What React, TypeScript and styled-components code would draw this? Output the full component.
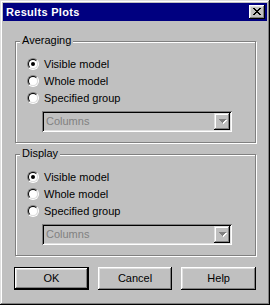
import React from 'react'
import styled, { createGlobalStyle } from 'styled-components'

const GlobalStyle = createGlobalStyle`
  html, body {
    margin: 0;
    padding: 0;
    background: #c0c0c0;
  }
  body {
    font-family: "Liberation Sans", Arial, sans-serif;
    font-size: 11px;
    color: #000;
  }
`

const Window = styled.div`
  width: 270px;
  height: 305px;
  box-sizing: border-box;
  padding: 3px;
  background: #c0c0c0;
  box-shadow: inset -1px -1px #000, inset 1px 1px #dfdfdf,
    inset -2px -2px #808080, inset 2px 2px #fff;
  display: flex;
  flex-direction: column;
`

const TitleBar = styled.div`
  height: 18px;
  background: #000080;
  color: #fff;
  display: flex;
  align-items: center;
  justify-content: space-between;
  padding: 0 2px 0 3px;
  font-weight: bold;
  font-size: 11px;
  line-height: 18px;
  letter-spacing: 0.3px;
`

const CloseButton = styled.div`
  width: 16px;
  height: 14px;
  box-sizing: border-box;
  padding: 3px 0 0 4px;
  background: #c0c0c0;
  box-shadow: inset -1px -1px #000, inset 1px 1px #fff,
    inset -2px -2px #808080, inset 2px 2px #dfdfdf;
  svg { display: block; }
`

const Body = styled.div`
  padding: 20px 11px 0 11px;
  display: flex;
  flex-direction: column;
`

const Group = styled.div<{ $gap?: number }>`
  position: relative;
  width: 241px;
  height: 102px;
  box-sizing: border-box;
  margin: ${p => p.$gap ?? 0}px 0 0 1px;
  border: 1px solid #808080;
  box-shadow: inset 1px 1px #fff, 1px 1px #fff;
  padding: 14px 0 0 11px;
`

const Legend = styled.span`
  position: absolute;
  top: -8px;
  left: 4px;
  padding: 0 2px;
  background: #c0c0c0;
  line-height: 13px;
`

const Options = styled.div`
  display: flex;
  flex-direction: column;
  gap: 1px;
`

const Option = styled.label`
  display: flex;
  align-items: center;
  height: 16px;
  line-height: 16px;
`

const RadioOuter = styled.span`
  flex: none;
  width: 12px;
  height: 12px;
  box-sizing: border-box;
  border-radius: 50%;
  border: 1px solid;
  border-color: #808080 #fff #fff #808080;
  margin-right: 5px;
`

const RadioInner = styled.span<{ $checked: boolean }>`
  display: flex;
  align-items: center;
  justify-content: center;
  width: 10px;
  height: 10px;
  box-sizing: border-box;
  border-radius: 50%;
  border: 1px solid;
  border-color: #000 #dfdfdf #dfdfdf #000;
  background: #fff;
  &::after {
    content: '';
    display: ${p => (p.$checked ? 'block' : 'none')};
    width: 4px;
    height: 4px;
    border-radius: 50%;
    background: #000;
  }
`

const Select = styled.div`
  margin: 5px 0 0 15px;
  width: 190px;
  height: 21px;
  box-sizing: border-box;
  padding: 2px;
  display: flex;
  box-shadow: inset 1px 1px #808080, inset -1px -1px #fff,
    inset 2px 2px #000, inset -2px -2px #dfdfdf;
`

const SelectText = styled.span`
  flex: 1;
  padding-left: 2px;
  line-height: 17px;
  color: #808080;
`

const SelectButton = styled.div`
  width: 16px;
  height: 17px;
  box-sizing: border-box;
  display: flex;
  align-items: center;
  justify-content: center;
  padding-left: 1px;
  box-shadow: inset -1px -1px #000, inset 1px 1px #dfdfdf,
    inset -2px -2px #808080, inset 2px 2px #fff;
  svg { display: block; }
`

const Buttons = styled.div`
  display: flex;
  gap: 9px;
  margin-top: 11px;
`

const Button = styled.button<{ $default?: boolean }>`
  width: 75px;
  height: 23px;
  box-sizing: border-box;
  padding: 0 0 2px;
  font-family: inherit;
  font-size: 11px;
  color: #000;
  background: #c0c0c0;
  border: ${p => (p.$default ? '1px solid #000' : 'none')};
  box-shadow: inset -1px -1px #000, inset 1px 1px #fff,
    inset -2px -2px #808080, inset 2px 2px #dfdfdf;
`

const CloseGlyph = () => (
  <svg width="8" height="7" viewBox="0 0 8 7" shapeRendering="crispEdges">
    <path fill="#000" d="M0 0h2v1H0zM6 0h2v1H6zM1 1h2v1H1zM5 1h2v1H5zM2 2h4v1H2zM3 3h2v1H3zM2 4h4v1H2zM1 5h2v1H1zM5 5h2v1H5zM0 6h2v1H0zM6 6h2v1H6z" />
  </svg>
)

const DisabledArrow = () => (
  <svg width="8" height="5" viewBox="0 0 8 5" shapeRendering="crispEdges">
    <path fill="#fff" d="M1 1h7v1H1zM2 2h5v1H2zM3 3h3v1H3zM4 4h1v1H4z" />
    <path fill="#808080" d="M0 0h7v1H0zM1 1h5v1H1zM2 2h3v1H2zM3 3h1v1H3z" />
  </svg>
)

const choices = ['Visible model', 'Whole model', 'Specified group']

const ScopeGroup: React.FC<{ title: string; gap?: number }> = ({ title, gap }) => (
  <Group $gap={gap}>
    <Legend>{title}</Legend>
    <Options>
      {choices.map((c, i) => (
        <Option key={c}>
          <RadioOuter>
            <RadioInner $checked={i === 0} />
          </RadioOuter>
          {c}
        </Option>
      ))}
    </Options>
    <Select>
      <SelectText>Columns</SelectText>
      <SelectButton>
        <DisabledArrow />
      </SelectButton>
    </Select>
  </Group>
)

const App: React.FC = () => {
  return (
    <>
      <GlobalStyle />
      <Window>
        <TitleBar>
          <span>Results Plots</span>
          <CloseButton>
            <CloseGlyph />
          </CloseButton>
        </TitleBar>
        <Body>
          <ScopeGroup title="Averaging" />
          <ScopeGroup title="Display" gap={11} />
          <Buttons>
            <Button $default>OK</Button>
            <Button>Cancel</Button>
            <Button>Help</Button>
          </Buttons>
        </Body>
      </Window>
    </>
  )
}

export default App
